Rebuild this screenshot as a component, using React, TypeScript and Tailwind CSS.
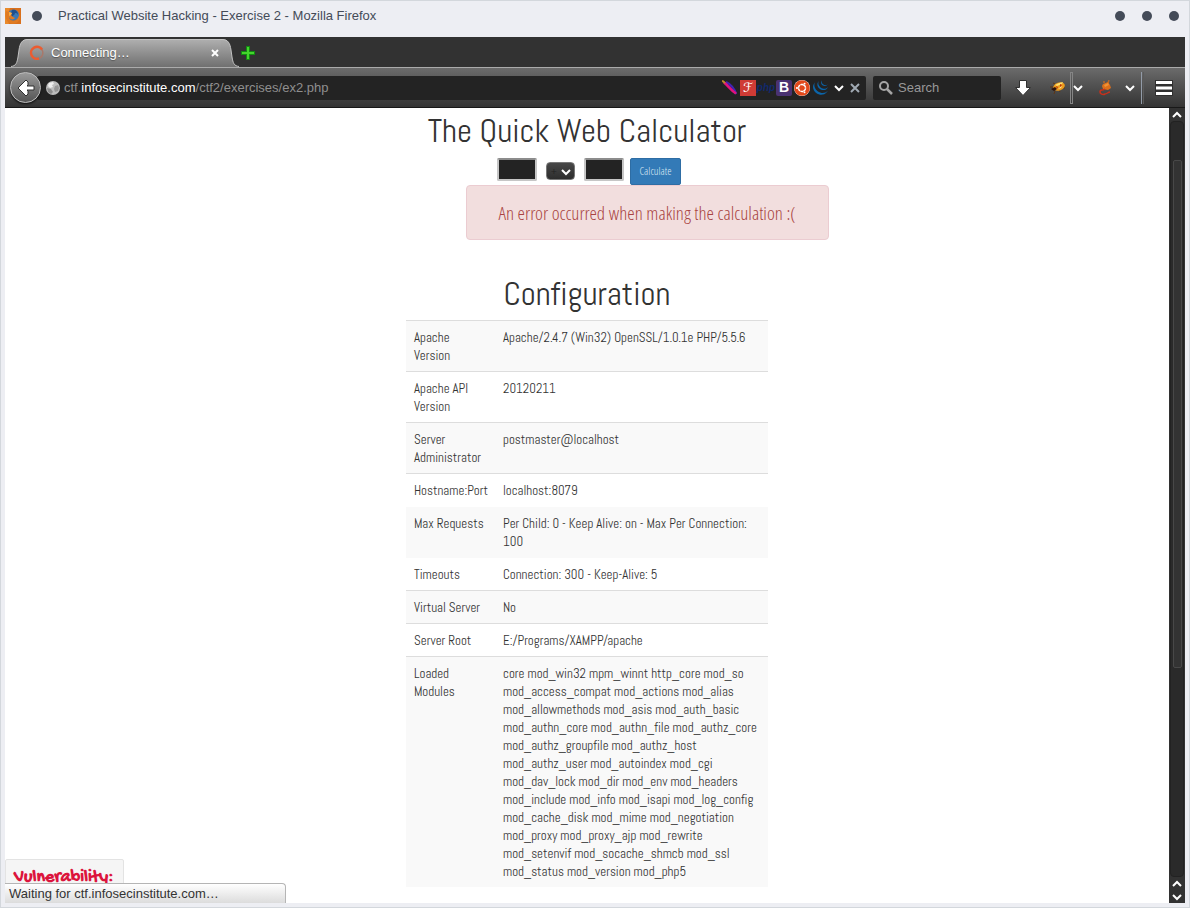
import type { ReactNode } from 'react';
import { FaUbuntu } from 'react-icons/fa';
import { SiJquery } from 'react-icons/si';

type ConfigRow = {
  name: string[];
  value: string[];
  ruled: boolean;
};

const configRows: ConfigRow[] = [
  { name: ['Apache', 'Version'], value: ['Apache/2.4.7 (Win32) OpenSSL/1.0.1e PHP/5.5.6'], ruled: true },
  { name: ['Apache API', 'Version'], value: ['20120211'], ruled: true },
  { name: ['Server', 'Administrator'], value: ['postmaster@localhost'], ruled: true },
  { name: ['Hostname:Port'], value: ['localhost:8079'], ruled: true },
  { name: ['Max Requests'], value: ['Per Child: 0 - Keep Alive: on - Max Per Connection:', '100'], ruled: false },
  { name: ['Timeouts'], value: ['Connection: 300 - Keep-Alive: 5'], ruled: false },
  { name: ['Virtual Server'], value: ['No'], ruled: true },
  { name: ['Server Root'], value: ['E:/Programs/XAMPP/apache'], ruled: true },
  {
    name: ['Loaded', 'Modules'],
    value: [
      'core mod_win32 mpm_winnt http_core mod_so',
      'mod_access_compat mod_actions mod_alias',
      'mod_allowmethods mod_asis mod_auth_basic',
      'mod_authn_core mod_authn_file mod_authz_core',
      'mod_authz_groupfile mod_authz_host',
      'mod_authz_user mod_autoindex mod_cgi',
      'mod_dav_lock mod_dir mod_env mod_headers',
      'mod_include mod_info mod_isapi mod_log_config',
      'mod_cache_disk mod_mime mod_negotiation',
      'mod_proxy mod_proxy_ajp mod_rewrite',
      'mod_setenvif mod_socache_shmcb mod_ssl',
      'mod_status mod_version mod_php5',
    ],
    ruled: true,
  },
];

function Chevron({ up = false, className = '' }: { up?: boolean; className?: string }) {
  return (
    <svg className={className} width="10" height="8" viewBox="0 0 10 8" fill="none" stroke="#fff" strokeWidth="2">
      <path d={up ? 'M1 6l4-4 4 4' : 'M1 2l4 4 4-4'} />
    </svg>
  );
}

function FirefoxIcon() {
  return (
    <svg width="16" height="16" viewBox="0 0 16 16">
      <rect width="16" height="16" fill="#d9701d" />
      <path d="M0 0h5L2 8l2 8H0z" fill="#e98a2b" />
      <circle cx="8.5" cy="7" r="5.5" fill="#3b78b5" />
      <path d="M7 2c3-1 6 1 6 5-1-2-2-2-3-2 0 2-2 2-3 4l-2-2 1-2z" fill="#1f4f8c" />
      <path d="M1 3l3 1 3 1-1 2 2 2 2 1-1 1c-2 1-4 0-5-2 0 4 6 6 9 1l2-4c1 6-3 10-7 10C2 16-1 9 1 3z" fill="#e07b22" />
      <path d="M4 4l3 1-1 2-2 1z" fill="#f3b04a" />
    </svg>
  );
}

function Globe() {
  return (
    <svg width="14" height="14" viewBox="0 0 14 14" className="shrink-0">
      <circle cx="7" cy="7" r="7" fill="#bdbdbd" />
      <path d="M3 2l4-1 1 2-2 1 1 2-3 1-2-2z" fill="#eee" />
      <path d="M9 5l3-1 1 3-1 3-3 1-1-3z" fill="#969696" />
      <path d="M1 7l4 1 2 3-2 2-3-2z" fill="#8b8b8b" />
    </svg>
  );
}

function ApacheFeather() {
  return (
    <svg width="16" height="16" viewBox="0 0 16 16" fill="none">
      <path d="M1 1l14 13" stroke="#8b5a20" />
      <path d="M4 2c4 2 8 6 10 12" stroke="#4322b4" strokeWidth="2.500" />
      <path d="M2 2.500c4 3 7 8 12 11" stroke="#e0127d" strokeWidth="2.500" />
      <path d="M0 .5l3 2.500" stroke="#c08a28" strokeWidth="2" />
    </svg>
  );
}

function TabCap({ side }: { side: 'left' | 'right' }) {
  const id = `cap-${side}`;
  return (
    <svg width="18" height="28" viewBox="0 0 18 28" className="shrink-0">
      <defs>
        <linearGradient id={id} x1="0" y1="0" x2="0" y2="1">
          <stop offset="0" stopColor="#aeaeae" />
          <stop offset="1" stopColor="#707070" />
        </linearGradient>
      </defs>
      <g transform={side === 'right' ? 'translate(18 0) scale(-1 1)' : undefined}>
        <path d="M0 28C5 27 6 24 7 18L8 11C9 4 11 0 17 0H18V28z" fill={`url(#${id})`} />
        <path d="M0 27.500C5 27 6 24 7 18L8 11C9 4 11 .5 17 .5H18" fill="none" stroke="#c2c2c2" />
      </g>
    </svg>
  );
}

function TitleBar() {
  return (
    <header className="flex h-9 items-center pr-2.5 pb-1.5 pl-1 text-[13px] text-[#444b58]">
      <FirefoxIcon />
      <span className="ml-[11px] size-2.5 rounded-full bg-[#444b58]" />
      <h1 className="ml-4 grow">Practical Website Hacking - Exercise 2 - Mozilla Firefox</h1>
      <div className="flex gap-[17px]">
        <button aria-label="Minimize" className="size-2.5 rounded-full bg-[#444b58]" />
        <button aria-label="Maximize" className="size-2.5 rounded-full bg-[#444b58]" />
        <button aria-label="Close" className="size-2.5 rounded-full bg-[#444b58]" />
      </div>
    </header>
  );
}

function TabStrip() {
  return (
    <div className="flex h-[30px] items-end bg-[#323232] pl-1.5">
      <TabCap side="left" />
      <div className="flex h-7 w-48 items-center border-t border-[#c2c2c2] bg-linear-to-b from-[#aeaeae] to-[#707070] pb-0.5 text-[13px] text-white">
        <svg width="16" height="16" viewBox="0 0 16 16" fill="none" strokeWidth="2.500">
          <path d="M12.500 4A6 6 0 0 1 11 13" stroke="#a9786a" strokeWidth="1.500" />
          <path d="M13 4.500A6 6 0 1 0 10 13.500" stroke="#ec5c30" />
        </svg>
        <span className="ml-1.5 grow [text-shadow:0_1px_1px_#555]">Connecting…</span>
        <button aria-label="Close tab" className="mr-0.5">
          <svg width="8" height="8" viewBox="0 0 8 8" stroke="#fff" strokeWidth="2">
            <path d="M1 1l6 6M7 1l-6 6" />
          </svg>
        </button>
      </div>
      <TabCap side="right" />
      <button aria-label="New tab" className="mb-[7px] ml-0.5">
        <svg width="14" height="14" viewBox="0 0 14 14">
          <path d="M5 0h4v5h5v4H9v5H5V9H0V5h5z" fill="#138a13" />
          <path d="M6 1h2v5h5v2H8v5H6V8H1V6h5z" fill="#43d52c" />
        </svg>
      </button>
    </div>
  );
}

function AddOnIcon({ children }: { children: ReactNode }) {
  return <span className="flex size-4 shrink-0 items-center justify-center">{children}</span>;
}

function Toolbar() {
  return (
    <div className="flex h-[41px] items-center border-t border-b border-t-[#ababab] border-b-[#181818] bg-linear-to-b from-[#6b6b6b] to-[#343434] pl-[5px] text-[13px]">
      <button
        aria-label="Back"
        className="z-10 flex size-[31px] shrink-0 items-center justify-center rounded-full border border-[#bdbdbd] bg-linear-to-b from-[#9a9a9a] to-[#555] shadow-[0_1px_2px_#111]"
      >
        <svg width="18" height="18" viewBox="0 0 18 18" fill="#fff" stroke="#303030" strokeWidth="1">
          <path d="M1 9l8-8 2 2v3L10 7h7v4h-7l1 1v3l-2 2z" />
        </svg>
      </button>
      <div className="-ml-1 flex h-6 grow items-center rounded-xs bg-[#232323] pr-1.5 pl-[9px]">
        <Globe />
        <div role="textbox" aria-label="Address" className="ml-1 grow text-[#8f8f8f]">
          ctf.<span className="text-white">infosecinstitute.com</span>/ctf2/exercises/ex2.php
        </div>
        <div className="flex items-center gap-0.5">
          <AddOnIcon><ApacheFeather /></AddOnIcon>
          <AddOnIcon>
            <span className="flex size-4 items-center justify-center bg-[#cf3b35] font-['DejaVu_Sans',sans-serif] text-[13px] text-white">ℱ</span>
          </AddOnIcon>
          <AddOnIcon><span className="text-[10px] font-bold text-[#11296c] italic">php</span></AddOnIcon>
          <AddOnIcon>
            <span className="flex size-4 items-center justify-center rounded-xs bg-[#4a3272] text-[14px] font-bold text-white">B</span>
          </AddOnIcon>
          <AddOnIcon>
            <span className="flex size-4 items-center justify-center rounded-full bg-white">
              <FaUbuntu size={16} color="#e2491b" />
            </span>
          </AddOnIcon>
          <AddOnIcon><SiJquery size={15} color="#0b65aa" /></AddOnIcon>
        </div>
        <button aria-label="Show history" className="ml-1.5"><Chevron /></button>
        <button aria-label="Stop" className="ml-1.5">
          <svg width="10" height="10" viewBox="0 0 10 10" stroke="#a0a9b3" strokeWidth="2">
            <path d="M1 1l8 8M9 1l-8 8" />
          </svg>
        </button>
      </div>
      <div className="ml-[7px] flex h-6 w-32 items-center rounded-xs bg-[#232323] pl-1.5">
        <svg width="14" height="14" viewBox="0 0 14 14" fill="none" stroke="#a5a5a5" strokeWidth="2" className="shrink-0">
          <circle cx="5" cy="5" r="4" />
          <path d="M8 8l5 5" strokeWidth="2.500" />
        </svg>
        <input aria-label="Search" placeholder="Search" className="ml-[5px] w-full bg-transparent placeholder:text-[#989898]" />
      </div>
      <div className="flex h-full shrink-0 items-center">
        <button aria-label="Downloads" className="ml-3.5">
          <svg width="16" height="16" viewBox="0 0 16 16" fill="#fff" stroke="#303030">
            <path d="M4.500.5h7v7h4L8 15.500.5 7.500h4z" />
          </svg>
        </button>
        <button aria-label="Firebug" className="ml-[19px]">
          <svg width="16" height="14" viewBox="0 0 16 14">
            <path d="M5 3L3 2M3 6L0 6M5 10l-1 3M9 9l1 2M13 7h2" stroke="#5d3515" />
            <ellipse cx="9" cy="5.500" rx="6" ry="4" fill="#ec9b1c" transform="rotate(-20 9 5.500)" />
            <path d="M5 4l4-2 4-1-1 2-5 2z" fill="#ffe070" />
            <path d="M1 8l4-2 2 2-3 2z" fill="#2e120b" />
            <path d="M6 5l2 1-1 2zM10 3l2 1-2 2z" fill="#b5300c" />
            <path d="M8 8l4-3-1 2z" fill="#fff0b0" />
          </svg>
        </button>
        <span className="ml-1 h-8 w-[3px] border border-[#858585]" />
        <button aria-label="Firebug options"><Chevron /></button>
        <button aria-label="Flame tools" className="ml-4">
          <svg width="14" height="16" viewBox="0 0 14 16">
            <path d="M5 3V1M9 3l1-3" stroke="#b8692a" strokeWidth="1.500" />
            <path d="M4 4l5-2 2 3 1 3-3 2-5-1-1-3z" fill="#dd6f1a" />
            <path d="M5 5l4-2 1 2-4 2z" fill="#ef9436" />
            <path d="M6 9c-2 2-5 0-5 3 0 2 3 3 5 2 2 0 3-2 5-2" fill="none" stroke="#c9301a" strokeWidth="1.500" />
          </svg>
        </button>
        <button aria-label="Flame tools options" className="ml-3"><Chevron /></button>
        <span className="ml-1.5 h-8 w-[3px] border-x border-l-[#929ba8] border-r-[#5a5a5a]" />
        <button aria-label="Open menu" className="mr-3 ml-[11px]">
          <svg width="18" height="16" viewBox="0 0 18 16">
            <path d="M0 0h18v16H0z" fill="#303030" />
            <path d="M1 1h16v3H1zM1 6.500h16v3H1zM1 12h16v3H1z" fill="#fff" />
          </svg>
        </button>
      </div>
    </div>
  );
}

function Scrollbar() {
  return (
    <div className="flex w-4 shrink-0 flex-col items-center bg-[#323232]">
      <button aria-label="Scroll up" className="flex h-[13px] items-center"><Chevron up /></button>
      <div className="flex w-3.5 grow flex-col items-center rounded-sm border border-[#222] bg-[#2a2a2a] pt-[38px]">
        <div className="h-[508px] w-[9px] rounded-xs border border-[#484848] bg-[#333]" />
      </div>
      <button aria-label="Scroll page up" className="flex h-[13px] items-center"><Chevron up /></button>
      <button aria-label="Scroll down" className="flex h-[13px] items-center"><Chevron /></button>
    </div>
  );
}

function Calculator() {
  return (
    <section className="flex flex-col items-center">
      <h2 className="h-[50px] text-[33px] leading-[46px] text-[#333]">The Quick Web Calculator</h2>
      <form className="flex h-[27px] items-start pl-1">
        <input aria-label="First number" className="h-[23px] w-10 rounded-xs border-2 border-[#c6c6c6] border-t-[#8c8c8c] bg-[#232323] text-white" />
        <span className="relative mt-1 ml-[9px] flex">
          <select aria-label="Operator" className="h-[18px] w-[29px] appearance-none rounded-sm border border-[#777] bg-linear-to-b from-[#484848] to-[#2d2d2d] pl-1 text-[10px] text-[#222]">
            <option>+</option>
            <option>-</option>
            <option>*</option>
            <option>/</option>
          </select>
          <Chevron className="pointer-events-none absolute top-1.5 right-1" />
        </span>
        <input aria-label="Second number" className="ml-[9px] h-[23px] w-10 rounded-xs border-2 border-[#c6c6c6] border-t-[#8c8c8c] bg-[#232323] text-white" />
        <button
          type="button"
          className="ml-1.5 h-[27px] w-[51px] rounded-xs border border-[#2e6da4] bg-[#337ab7] font-['Open_Sans_Condensed_Light','Open_Sans_Light_Condensed','Abel',sans-serif] text-[11px] font-light text-[#dfeaf4]"
        >
          Calculate
        </button>
      </form>
      <p
        role="alert"
        className="ml-30 flex h-[55px] w-[363px] items-center justify-center rounded-sm border border-[#ebccd1] bg-[#f2dede] pt-0.5 font-['Open_Sans_Condensed_Light','Open_Sans_Light_Condensed','Abel',sans-serif] text-[19px] font-light text-[#a94442]"
      >
        An error occurred when making the calculation :(
      </p>
    </section>
  );
}

function Configuration() {
  return (
    <section className="mt-[31px] flex flex-col items-center pb-4">
      <h2 className="h-[49px] text-[33px] leading-[46px] text-[#333]">Configuration</h2>
      <table className="w-[362px] table-fixed text-[13px] leading-[18px] text-[#333]">
        <colgroup>
          <col className="w-[89px]" />
          <col />
        </colgroup>
        <tbody>
          {configRows.map((row) => (
            <tr key={row.name.join(' ')} className="align-top odd:bg-[#f9f9f9]">
              {[row.name, row.value].map((lines, i) => (
                <td key={i} className={`border-t px-2 pt-2 pb-1.5 whitespace-nowrap ${row.ruled ? 'border-[#ddd]' : 'border-transparent'}`}>
                  {lines.map((line) => (
                    <div key={line}>{line}</div>
                  ))}
                </td>
              ))}
            </tr>
          ))}
        </tbody>
      </table>
    </section>
  );
}

export default function App() {
  return (
    <div className="flex min-h-screen flex-col border border-[#d3d7dc] bg-[#edeef3] font-['Liberation_Sans',Arial,sans-serif]">
      <TitleBar />
      <div className="mx-1 mb-1 flex grow flex-col">
        <TabStrip />
        <Toolbar />
        <div className="relative flex grow overflow-hidden bg-white">
          <main className="grow font-['Abel','Open_Sans_Condensed','Liberation_Sans_Narrow',sans-serif]">
            <Calculator />
            <Configuration />
          </main>
          <Scrollbar />
          {/* hint panel peeks out from behind the status popup */}
          <aside className="absolute bottom-0 left-0 h-11 w-[119px] rounded-t-xs border border-[#e3e3e3] bg-[#f5f5f5] pt-2 pl-2">
            <strong className="block font-['Gochi_Hand','Caveat_Brush','Lato',sans-serif] text-[18px] leading-5 font-black text-[#dc143c]">Vulnerability:</strong>
          </aside>
          <div role="status" className="absolute bottom-0 left-0 flex h-5 w-[281px] items-center rounded-tr-sm border-t border-r border-[#b5b5b5] bg-linear-to-b from-white to-[#dcdcdc] pl-1 text-[13px] text-[#333]">
            Waiting for ctf.infosecinstitute.com…
          </div>
        </div>
      </div>
    </div>
  );
}
